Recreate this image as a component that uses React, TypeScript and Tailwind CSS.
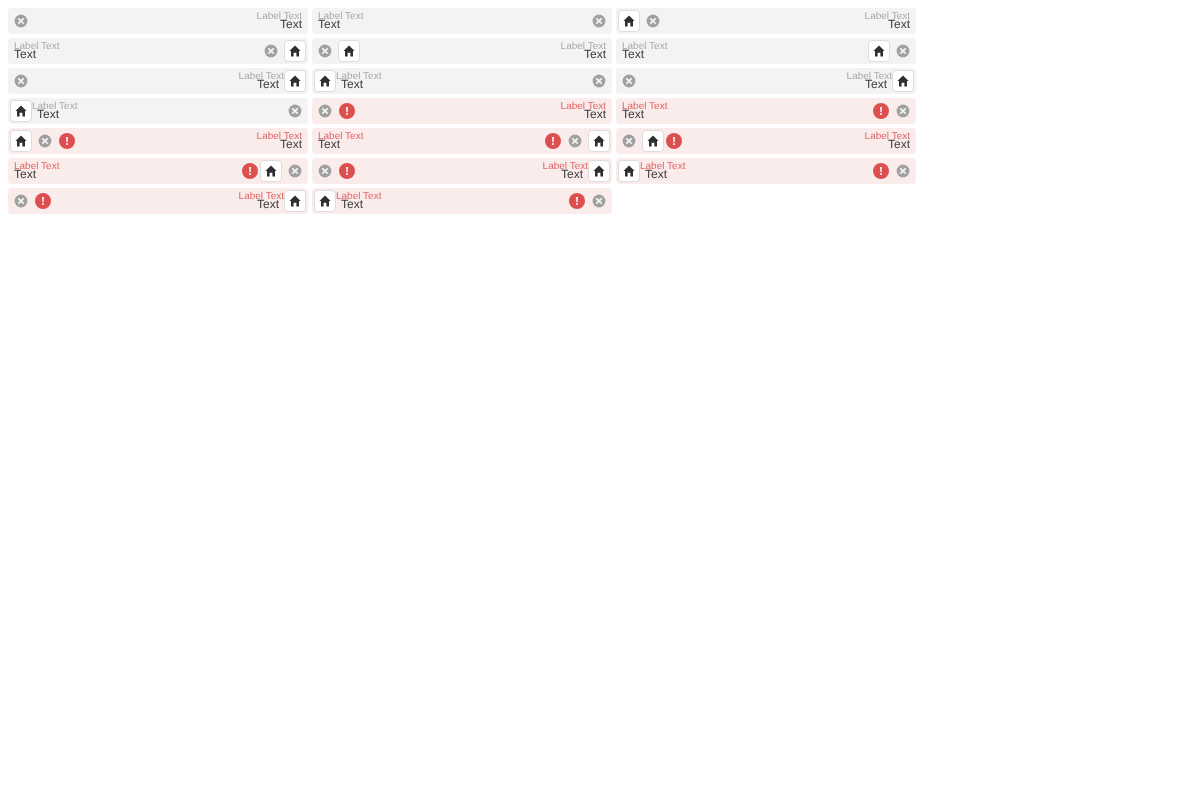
type Part = 'clear' | 'home' | 'alert' | 'start' | 'end';

const rows: { error?: boolean; parts: Part[] }[] = [
  { parts: ['clear', 'end'] },
  { parts: ['start', 'clear'] },
  { parts: ['home', 'clear', 'end'] },
  { parts: ['start', 'clear', 'home'] },
  { parts: ['clear', 'home', 'end'] },
  { parts: ['start', 'home', 'clear'] },
  { parts: ['clear', 'end', 'home'] },
  { parts: ['home', 'start', 'clear'] },
  { parts: ['clear', 'end', 'home'] },
  { parts: ['home', 'start', 'clear'] },
  { error: true, parts: ['clear', 'alert', 'end'] },
  { error: true, parts: ['start', 'alert', 'clear'] },
  { error: true, parts: ['home', 'clear', 'alert', 'end'] },
  { error: true, parts: ['start', 'alert', 'clear', 'home'] },
  { error: true, parts: ['clear', 'home', 'alert', 'end'] },
  { error: true, parts: ['start', 'alert', 'home', 'clear'] },
  { error: true, parts: ['clear', 'alert', 'end', 'home'] },
  { error: true, parts: ['home', 'start', 'alert', 'clear'] },
  { error: true, parts: ['clear', 'alert', 'end', 'home'] },
  { error: true, parts: ['home', 'start', 'alert', 'clear'] },
];

function ClearIcon() {
  return (
    <span className="flex h-[22px] w-[22px] shrink-0 items-center justify-center">
      <svg width="14" height="14" viewBox="0 0 14 14">
        <circle cx="7" cy="7" r="6.4" fill="#a0a0a0" />
        <path d="M4.3 4.3l5.4 5.4M9.7 4.3l-5.4 5.4" stroke="#f3f3f3" strokeWidth="1.8" />
      </svg>
    </span>
  );
}

function HomeButton() {
  return (
    <span className="flex h-[22px] w-[22px] shrink-0 items-center justify-center rounded-[4px] border border-[#dddddd] bg-white">
      <svg width="14" height="14" viewBox="0 0 14 14" fill="#2f2f2f">
        <path d="M7 1.4L1.4 7.1h1.6v5.5h2.6V8.8h2.8v3.8H11V7.1h1.6z" />
      </svg>
    </span>
  );
}

function AlertIcon({ left, right }: { left: boolean; right: boolean }) {
  return (
    <span className={`flex h-4 w-4 shrink-0 items-center justify-center rounded-full bg-[#db4f4f] ${left ? 'ml-px' : ''} ${right ? 'mr-px' : ''}`}>
      <svg width="16" height="16" viewBox="0 0 16 16" fill="#fbecec">
        <path d="M7 4h2l-.3 5.2H7.3z" />
        <rect x="7.1" y="10.2" width="1.8" height="1.8" />
      </svg>
    </span>
  );
}

function TextBlock({ end, left, right, error }: { end: boolean; left?: Part; right?: Part; error?: boolean }) {
  // the label sits flush on the home button, the value is pushed off it
  const valuePad = left === 'home' ? 'pl-[5px]' : right === 'home' ? 'pr-[5px]' : '';
  const edge = !left ? 'ml-1' : !right ? 'mr-1' : '';
  const flush = left === 'home' ? '-ml-0.5' : right === 'home' ? '-mr-0.5' : '';
  return (
    <div className={`flex min-w-0 flex-1 flex-col will-change-transform [text-rendering:geometricPrecision] ${end ? 'items-end' : 'items-start'} ${edge} ${flush}`}>
      <span className={`text-[10px] leading-[12px] ${error ? 'text-[#df6464]' : 'text-[#a8a8a8]'}`}>Label Text</span>
      <span className={`-mt-[5px] text-xs leading-[13px] text-[#3a3a3a] ${valuePad}`}>Text</span>
    </div>
  );
}

function Field({ error, parts }: { error?: boolean; parts: Part[] }) {
  return (
    <div className={`flex h-[26px] items-center gap-0.5 rounded-[4px] p-0.5 ${error ? 'bg-[#fbecec]' : 'bg-[#f3f3f3]'}`}>
      {parts.map((p, i) => {
        const left = parts[i - 1];
        const right = parts[i + 1];
        if (p === 'clear') return <ClearIcon key={i} />;
        if (p === 'home') return <HomeButton key={i} />;
        if (p === 'alert') return <AlertIcon key={i} left={left === 'clear'} right={right === 'clear'} />;
        return <TextBlock key={i} end={p === 'end'} left={left} right={right} error={error} />;
      })}
    </div>
  );
}

export default function App() {
  return (
    <div className="grid w-[924px] grid-cols-3 gap-1 p-2 font-['Liberation_Sans',Arial,sans-serif]">
      {rows.map((r, i) => (
        <Field key={i} error={r.error} parts={r.parts} />
      ))}
    </div>
  );
}
